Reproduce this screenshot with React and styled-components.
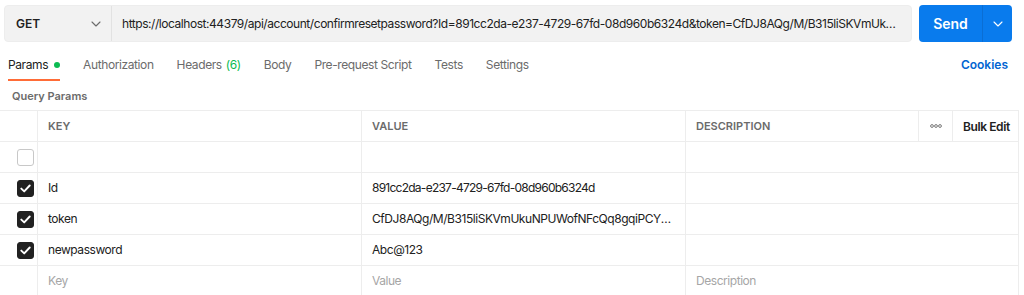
import styled, { createGlobalStyle } from "styled-components";

const GlobalStyle = createGlobalStyle`
  body {
    margin: 0;
    background: #ffffff;
    font-family: Inter, "Open Sans", sans-serif;
    color: #212121;
  }
`;

const URL_TEXT =
  "https://localhost:44379/api/account/confirmresetpassword?Id=891cc2da-e237-4729-67fd-08d960b6324d&token=CfDJ8AQg/M/B315liSKVmUkuNPUWofNFcQq8gqiPCYk0aZ7nXw3LtR";

const TOKEN =
  "CfDJ8AQg/M/B315liSKVmUkuNPUWofNFcQq8gqiPCYk0aZ7nXw3LtRhp2Ej";

const params = [
  { key: "Id", value: "891cc2da-e237-4729-67fd-08d960b6324d", tight: true },
  { key: "token", value: TOKEN },
  { key: "newpassword", value: "Abc@123" },
];

const tabs = [
  { label: "Params", dot: true, active: true },
  { label: "Authorization" },
  { label: "Headers", count: 6 },
  { label: "Body" },
  { label: "Pre-request Script" },
  { label: "Tests" },
  { label: "Settings" },
];

const Chevron = ({ color = "#6b6b6b" }) => (
  <svg width="10" height="6" viewBox="0 0 10 6" fill="none">
    <path d="M1 1l4 4 4-4" stroke={color} strokeWidth="1.1" strokeLinecap="round" strokeLinejoin="round" />
  </svg>
);

const Dots = () => (
  <svg width="12" height="4" viewBox="0 0 12 4" fill="none">
    <circle cx="2" cy="2" r="1.4" stroke="#6b6b6b" strokeWidth="0.9" />
    <circle cx="6" cy="2" r="1.4" stroke="#6b6b6b" strokeWidth="0.9" />
    <circle cx="10" cy="2" r="1.4" stroke="#6b6b6b" strokeWidth="0.9" />
  </svg>
);

const App = () => {
  return (
    <Page>
      <GlobalStyle />
      {/* request bar */}
      <RequestBar>
        <UrlGroup>
          <Method>
            <span>GET</span>
            <Chevron />
          </Method>
          <UrlInput>{URL_TEXT}</UrlInput>
        </UrlGroup>
        <SendButton>
          <SendLabel>Send</SendLabel>
          <SendMenu>
            <Chevron color="#ffffff" />
          </SendMenu>
        </SendButton>
      </RequestBar>

      {/* tabs */}
      <TabBar>
        <Tabs>
          {tabs.map((t) => (
            <Tab key={t.label} $active={t.active}>
              {t.label}
              {t.count && <Count>({t.count})</Count>}
              {t.dot && <Dot />}
            </Tab>
          ))}
        </Tabs>
        <Cookies>Cookies</Cookies>
      </TabBar>

      <SectionTitle>Query Params</SectionTitle>

      {/* params table */}
      <Table>
        <HeadCell />
        <HeadCell>KEY</HeadCell>
        <HeadCell>VALUE</HeadCell>
        <HeadCell>DESCRIPTION</HeadCell>
        <HeadCell $center>
          <Dots />
        </HeadCell>
        <HeadCell $dark>Bulk Edit</HeadCell>

        <CheckCell>
          <Checkbox />
        </CheckCell>
        <Cell />
        <Cell />
        <Cell $span />

        {params.map((p) => (
          <Row key={p.key}>
            <CheckCell>
              <Checkbox $checked>
                <svg width="11" height="9" viewBox="0 0 11 9" fill="none">
                  <path d="M1.3 4.6l2.9 2.8L9.7 1.5" stroke="#fff" strokeWidth="1.9" strokeLinecap="round" strokeLinejoin="round" />
                </svg>
              </Checkbox>
            </CheckCell>
            <Cell>{p.key}</Cell>
            <Cell $tight={p.tight}>{p.value}</Cell>
            <Cell $span />
          </Row>
        ))}

        <CheckCell />
        <Cell $placeholder>Key</Cell>
        <Cell $placeholder>Value</Cell>
        <Cell $span $placeholder>Description</Cell>
      </Table>
    </Page>
  );
};

const Page = styled.div`
  width: 1024px;
  height: 295px;
  overflow: hidden;
`;

const RequestBar = styled.div`
  display: flex;
  gap: 7px;
  padding: 5px 12px 0 4px;
  height: 37px;
`;

const UrlGroup = styled.div`
  flex: 1;
  display: flex;
  min-width: 0;
  background: #f2f2f2;
  border: 1px solid #ededed;
  border-radius: 4px;
`;

const Method = styled.div`
  width: 107px;
  flex: none;
  display: flex;
  align-items: center;
  justify-content: space-between;
  padding: 0 10px 0 11px;
  box-sizing: border-box;
  border-right: 1px solid #e2e2e2;
  font-size: 12px;
  font-weight: 600;
  color: #212121;
`;

const UrlInput = styled.div`
  flex: 1;
  min-width: 0;
  padding: 0 14px 0 10px;
  font-size: 12px;
  letter-spacing: -0.45px;
  color: #212121;
  white-space: nowrap;
  overflow: hidden;
  text-overflow: ellipsis;
  line-height: 35px;
`;

const SendButton = styled.div`
  width: 93px;
  flex: none;
  display: flex;
  background: #097bed;
  border-radius: 4px;
  color: #ffffff;
`;

const SendLabel = styled.div`
  width: 63px;
  display: flex;
  align-items: center;
  justify-content: center;
  font-size: 14px;
  font-weight: 600;
  border-right: 1px solid #0a6ed4;
`;

const SendMenu = styled.div`
  flex: 1;
  display: flex;
  align-items: center;
  justify-content: center;
`;

const TabBar = styled.div`
  display: flex;
  align-items: stretch;
  justify-content: space-between;
  height: 30px;
  margin-top: 9px;
  padding: 0 16px 0 8px;
`;

const Tabs = styled.div`
  display: flex;
  gap: 23px;
`;

const Tab = styled.div`
  display: flex;
  align-items: center;
  gap: 4px;
  font-size: 12px;
  letter-spacing: -0.4px;
  color: ${({ $active }) => ($active ? "#212121" : "#6b6b6b")};
  border-bottom: 2px solid ${({ $active }) => ($active ? "#ff6c37" : "transparent")};
  padding-bottom: 1px;
  box-sizing: border-box;
`;

const Count = styled.span`
  color: #0cbb52;
`;

const Dot = styled.span`
  width: 6px;
  height: 6px;
  border-radius: 50%;
  background: #0cbb52;
  margin-left: 2px;
`;

const Cookies = styled.div`
  display: flex;
  align-items: center;
  padding-bottom: 3px;
  font-size: 12px;
  font-weight: 600;
  color: #0265d2;
`;

const SectionTitle = styled.div`
  height: 29px;
  display: flex;
  align-items: center;
  padding-left: 12px;
  font-size: 11px;
  font-weight: 600;
  color: #6b6b6b;
`;

const Table = styled.div`
  display: grid;
  grid-template-columns: 38px 324px 324px 233px 34px 66px;
  grid-auto-rows: 31px;
  width: 1019px;
  border-top: 1px solid #ededed;
  box-sizing: border-box;
`;

const Row = styled.div`
  display: contents;
`;

const HeadCell = styled.div`
  display: flex;
  align-items: center;
  justify-content: ${({ $center }) => ($center ? "center" : "flex-start")};
  padding: 0 ${({ $center }) => ($center ? "0" : "10px")};
  border-bottom: 1px solid #ededed;
  border-right: 1px solid #ededed;
  font-size: ${({ $dark }) => ($dark ? "12px" : "11px")};
  letter-spacing: ${({ $dark }) => ($dark ? "-0.4px" : "0")};
  font-weight: 600;
  color: ${({ $dark }) => ($dark ? "#212121" : "#6b6b6b")};
  white-space: nowrap;
`;

const Cell = styled.div`
  grid-column: ${({ $span }) => ($span ? "span 3" : "auto")};
  padding: 0 10px;
  line-height: 30px;
  border-bottom: 1px solid #ededed;
  border-right: 1px solid #ededed;
  font-size: 12px;
  letter-spacing: ${({ $tight }) => ($tight ? "-0.75px" : "-0.45px")};
  color: ${({ $placeholder }) => ($placeholder ? "#a6a6a6" : "#212121")};
  white-space: nowrap;
  overflow: hidden;
  text-overflow: ellipsis;
  min-width: 0;
`;

const CheckCell = styled.div`
  display: flex;
  align-items: center;
  justify-content: flex-end;
  padding-right: 3px;
  border-bottom: 1px solid #ededed;
  border-right: 1px solid #ededed;
`;

const Checkbox = styled.div`
  width: 17px;
  height: 17px;
  box-sizing: border-box;
  border-radius: 3px;
  display: flex;
  align-items: center;
  justify-content: center;
  background: ${({ $checked }) => ($checked ? "#212121" : "#ffffff")};
  border: 1px solid ${({ $checked }) => ($checked ? "#212121" : "#c8c8c8")};
`;

export default App;
